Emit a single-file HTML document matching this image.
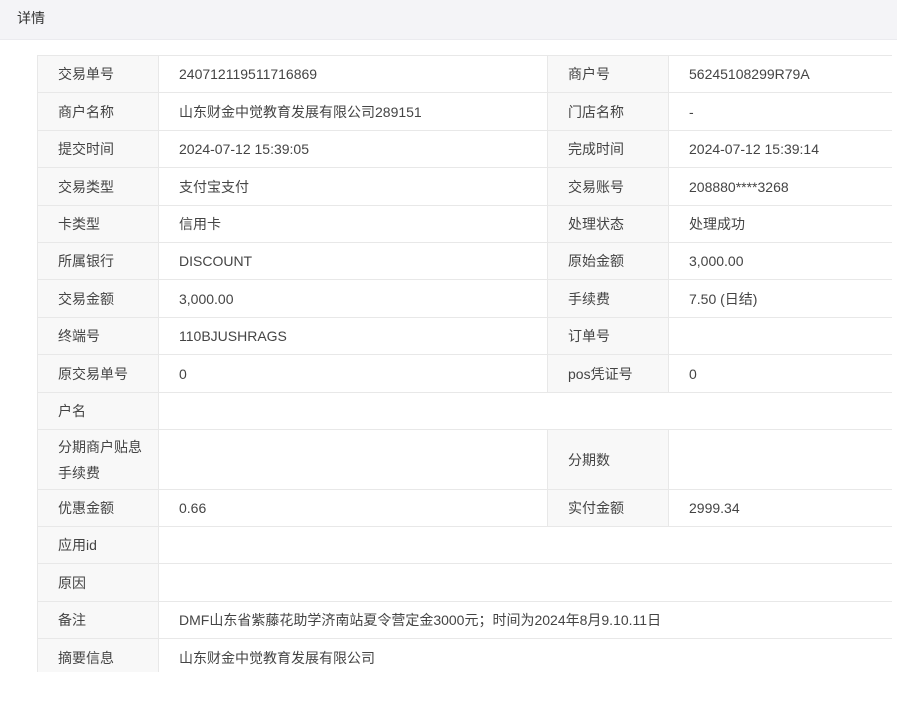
<!DOCTYPE html>
<html><head><meta charset="utf-8"><style>
*{box-sizing:border-box;margin:0;padding:0}
body{width:897px;height:707px;background:#fff;font-family:"Liberation Sans","Noto Sans CJK SC",sans-serif;font-size:14px;color:#444;overflow:hidden;position:relative}
.hd{position:absolute;left:0;top:0;width:897px;height:40px;background:#f4f4f7;border-bottom:1px solid #ebebef;padding:8px 0 0 17px;font-size:14px;color:#333}
.wrap{position:absolute;left:37px;top:55px;width:855px;height:617px;overflow:hidden}
table{border-collapse:collapse;table-layout:fixed;width:855px}
td{border:1px solid #e8e8e8;padding:0 20px;line-height:22px;vertical-align:middle;color:#444}
td.l{background:#f8f8f8}
</style></head><body>
<div class="hd">详情</div>
<div class="wrap"><table>
<colgroup><col style="width:121px"><col style="width:389px"><col style="width:121px"><col style="width:224px"></colgroup>
<tr style="height:37px"><td class="l">交易单号</td><td>240712119511716869</td><td class="l">商户号</td><td>56245108299R79A</td></tr>
<tr style="height:38px"><td class="l">商户名称</td><td>山东财金中觉教育发展有限公司289151</td><td class="l">门店名称</td><td>-</td></tr>
<tr style="height:37px"><td class="l">提交时间</td><td>2024-07-12 15:39:05</td><td class="l">完成时间</td><td>2024-07-12 15:39:14</td></tr>
<tr style="height:38px"><td class="l">交易类型</td><td>支付宝支付</td><td class="l">交易账号</td><td>208880****3268</td></tr>
<tr style="height:37px"><td class="l">卡类型</td><td>信用卡</td><td class="l">处理状态</td><td>处理成功</td></tr>
<tr style="height:37px"><td class="l">所属银行</td><td>DISCOUNT</td><td class="l">原始金额</td><td>3,000.00</td></tr>
<tr style="height:38px"><td class="l">交易金额</td><td>3,000.00</td><td class="l">手续费</td><td>7.50 (日结)</td></tr>
<tr style="height:37px"><td class="l">终端号</td><td>110BJUSHRAGS</td><td class="l">订单号</td><td></td></tr>
<tr style="height:38px"><td class="l">原交易单号</td><td>0</td><td class="l">pos凭证号</td><td>0</td></tr>
<tr style="height:37px"><td class="l">户名</td><td colspan="3"></td></tr>
<tr style="height:60px"><td class="l" style="line-height:26px;padding-right:6px">分期商户贴息手续费</td><td></td><td class="l">分期数</td><td></td></tr>
<tr style="height:37px"><td class="l">优惠金额</td><td>0.66</td><td class="l">实付金额</td><td>2999.34</td></tr>
<tr style="height:37px"><td class="l">应用id</td><td colspan="3"></td></tr>
<tr style="height:38px"><td class="l">原因</td><td colspan="3"></td></tr>
<tr style="height:37px"><td class="l">备注</td><td colspan="3">DMF山东省紫藤花助学济南站夏令营定金3000元；时间为2024年8月9.10.11日</td></tr>
<tr style="height:38px"><td class="l">摘要信息</td><td colspan="3">山东财金中觉教育发展有限公司</td></tr>
</table></div>
</body></html>
